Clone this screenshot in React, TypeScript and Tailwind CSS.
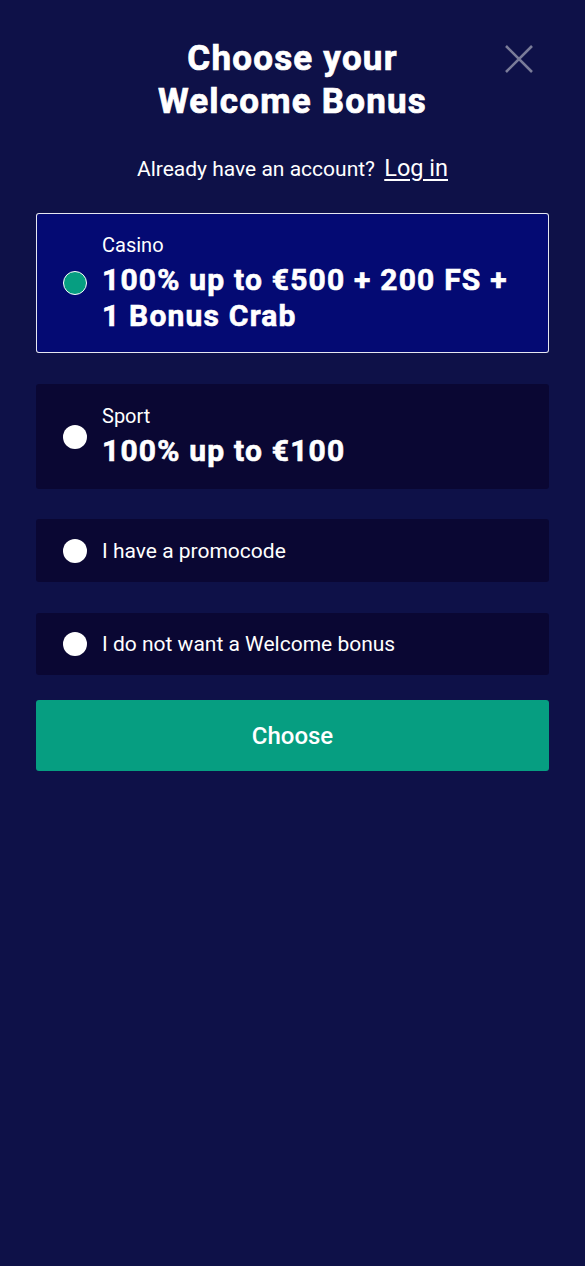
import React from "react";

const Radio = ({ checked }: { checked?: boolean }) => (
  <span
    className={
      checked
        ? "block w-6 h-6 shrink-0 rounded-full bg-[#069e81] border border-white"
        : "block w-6 h-6 shrink-0 rounded-full bg-white"
    }
  />
);

export default function App() {
  return (
    <div
      className="min-h-[1266px] w-full bg-[#0e1148] text-white px-9"
      style={{ fontFamily: "Roboto, 'Noto Sans', Arial, sans-serif" }}
    >
      <div className="relative pt-[37px]">
        <h1 className="text-center font-bold text-[35px] leading-[43px] tracking-[1.2px] [-webkit-text-stroke:0.7px_white]">
          Choose your
          <br />
          Welcome Bonus
        </h1>
        <button className="absolute right-[16px] top-[45px] w-[28px] h-[28px]" aria-label="close">
          <svg viewBox="0 0 28 28" className="w-[28px] h-[28px]">
            <path d="M1 1 L27 27 M27 1 L1 27" stroke="#7a7c99" strokeWidth="2.6" />
          </svg>
        </button>
      </div>
      <p className="mt-[30px] text-center text-[21px] leading-[30px]">
        Already have an account?{" "}
        <a className="underline underline-offset-[3px] text-[23.5px] ml-1">Log in</a>
      </p>

      <div className="mt-[29px] flex flex-col">
        <div className="h-[140px] flex items-center gap-[15px] pl-[26px] pr-4 bg-[#040a73] border border-white/90 rounded-[3px]">
          <Radio checked />
          <div className="flex flex-col">
            <span className="text-[20px] leading-[24px]">Casino</span>
            <span className="font-bold text-[30px] leading-[36px] mt-[5px] tracking-[1.2px] [-webkit-text-stroke:0.6px_white]">
              100% up to €500 + 200 FS + 1 Bonus Crab
            </span>
          </div>
        </div>

        <div className="mt-[31px] h-[105px] flex items-center gap-[15px] pl-[27px] pr-4 bg-[#0a0733] rounded-[3px]">
          <Radio />
          <div className="flex flex-col">
            <span className="text-[20px] leading-[24px]">Sport</span>
            <span className="font-bold text-[30px] leading-[36px] mt-[5px] tracking-[1.2px] [-webkit-text-stroke:0.6px_white]">
              100% up to €100
            </span>
          </div>
        </div>

        <div className="mt-[30px] h-[63px] flex items-center gap-[15px] pl-[27px] pr-4 bg-[#0a0733] rounded-[3px]">
          <Radio />
          <span className="text-[21px] leading-[28px]">I have a promocode</span>
        </div>

        <div className="mt-[31px] h-[62px] flex items-center gap-[15px] pl-[27px] pr-4 bg-[#0a0733] rounded-[3px]">
          <Radio />
          <span className="text-[21px] leading-[28px]">I do not want a Welcome bonus</span>
        </div>

        <button className="mt-[25px] h-[71px] w-full bg-[#069e81] rounded-[3px] text-[24px] font-medium">
          Choose
        </button>
      </div>
    </div>
  );
}
